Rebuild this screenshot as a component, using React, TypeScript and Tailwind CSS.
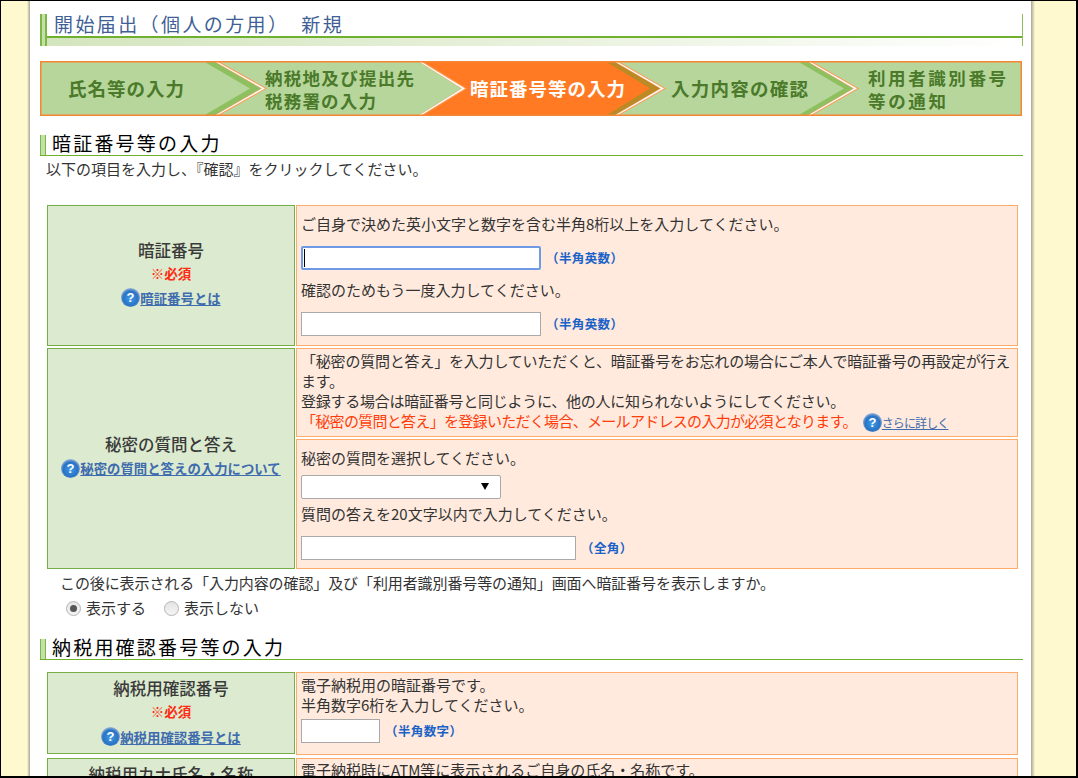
import type { ReactNode } from "react";

const STEP_BOUNDS = [
  { top: 175, tip: 224, bandTop: 163, bandTip: 210, band: "#8fc060", fill: "#b7d69b" },
  { top: 379, tip: 424, bandTop: 377, bandTip: 421, band: "#b7d69b", fill: "#b7d69b" },
  { top: 575, tip: 623, bandTop: 565, bandTip: 610, band: "#bc8a25", fill: "#ff7a22" },
  { top: 768, tip: 816, bandTop: 757, bandTip: 804, band: "#8fc060", fill: "#b7d69b" },
];

function chevron(top: number, tip: number) {
  return `0,0 ${top},0 ${tip},27.5 ${top},55 0,55`;
}

function StepBar() {
  const font = { fontFamily: '"Noto Sans CJK JP", sans-serif', fontWeight: 700 };
  return (
    <svg width="982" height="55" viewBox="0 0 982 55" className="mt-[15px] block">
      <rect width="982" height="55" fill="#b7d69b" />
      {[...STEP_BOUNDS].reverse().map((b) => (
        <g key={b.top}>
          <polygon points={chevron(b.top + 3, b.tip + 3)} fill="#ff9a55" />
          <polygon points={chevron(b.top + 1, b.tip + 1)} fill="#ffffff" />
          <polygon points={chevron(b.top - 1, b.tip - 2)} fill="#f5a56e" />
          <polygon points={chevron(b.top - 2, b.tip - 3)} fill={b.band} />
          <polygon points={chevron(b.bandTop, b.bandTip)} fill={b.fill} />
        </g>
      ))}
      <rect x="0.75" y="0.75" width="980.5" height="53.5" fill="none" stroke="#f58634" strokeWidth="1.5" />
      <g style={font} fill="#4a7a2a">
        <text x="28" y="35" fontSize="18.5" textLength="116">氏名等の入力</text>
        <text x="225" y="24" fontSize="17.5" textLength="149">納税地及び提出先</text>
        <text x="225" y="47" fontSize="17.5" textLength="111">税務署の入力</text>
        <text x="631" y="35" fontSize="18.5" textLength="137">入力内容の確認</text>
        <text x="828" y="24" fontSize="17.5" textLength="138">利用者識別番号</text>
        <text x="828" y="47" fontSize="17.5" textLength="78">等の通知</text>
      </g>
      <text x="430" y="35" fontSize="18.5" textLength="155" fill="#ffffff" style={font}>暗証番号等の入力</text>
    </svg>
  );
}

function TitleBar() {
  return (
    <div className="relative h-[32px] border-r border-[#8cbf5a]">
      <div className="flex h-[24px] items-end border-b-2 border-[#6fb02e] pb-[1px] pl-[14px] text-[19px] leading-[22px] tracking-[2.4px] text-[#3f5f96] whitespace-pre">
        開始届出（個人の方用）　新規
      </div>
      <div className="h-[8px] bg-gradient-to-r from-[#d3e5bd] via-[#e8f1dc] to-white" />
      <div className="absolute top-0 left-0 h-[32px] w-[7px] border-x-2 border-[#7db846] bg-[#c5dfa8]" />
    </div>
  );
}

function SectionHeading({ children, className }: { children: ReactNode; className: string }) {
  return (
    <div className={`flex h-[21px] items-end border-b border-[#6fb02e] ${className}`}>
      <div className="h-[20px] w-[6px] border-x border-[#7db846] bg-[#c5dfa8]" />
      <h2 className="mb-[1px] ml-[6px] text-[19px] leading-[22px] font-normal tracking-[2.2px] text-black">{children}</h2>
    </div>
  );
}

function HelpIcon() {
  return (
    <svg width="19" height="19" viewBox="0 0 19 19" className="shrink-0">
      <defs>
        <radialGradient id="help" cx="50%" cy="55%" r="55%">
          <stop offset="0%" stopColor="#3f9be8" />
          <stop offset="70%" stopColor="#2a72c4" />
          <stop offset="100%" stopColor="#9db8da" />
        </radialGradient>
      </defs>
      <circle cx="9.5" cy="9.5" r="9.5" fill="url(#help)" />
      <text x="9.5" y="14" textAnchor="middle" fontSize="13" fontWeight="700" fill="#fff" fontFamily='"Liberation Sans", sans-serif'>?</text>
    </svg>
  );
}

function HelpLink({ children }: { children: ReactNode }) {
  return (
    <span className="inline-flex items-center">
      <HelpIcon />
      <span className="text-[13.4px] leading-[18px] font-bold text-[#3f6cae] underline">{children}</span>
    </span>
  );
}

function Required() {
  return <div className="text-[13.5px] leading-[18px] font-bold text-[#ff2a12]">※必須</div>;
}

function HeadCell({ children, className }: { children: ReactNode; className: string }) {
  return (
    <div className={`flex flex-col items-center border border-[#74ae45] bg-[#dcebcf] text-[#3a3a3a] ${className}`}>
      {children}
    </div>
  );
}

function HeadTitle({ children }: { children: ReactNode }) {
  return <div className="text-[16.5px] leading-[20px] font-medium">{children}</div>;
}

function BodyCell({ children, className }: { children: ReactNode; className?: string }) {
  return <div className={`border border-[#ffab6b] bg-[#ffeadd] pl-[4px] ${className ?? ""}`}>{children}</div>;
}

function Hint({ children }: { children: ReactNode }) {
  return <span className="ml-[5px] text-[12.5px] font-bold tracking-[0.4px] text-[#1a62c8]">{children}</span>;
}

function TextBox({ className }: { className: string }) {
  return <input type="text" className={`block h-[24px] border border-[#a9a9a9] bg-white ${className}`} />;
}

function Radio({ checked }: { checked?: boolean }) {
  return (
    <span className="flex h-[15px] w-[15px] items-center justify-center rounded-full border border-[#b5b5b5] bg-gradient-to-b from-[#e4e4e4] to-[#f4f4f4]">
      {checked && <span className="h-[7px] w-[7px] rounded-full bg-[#555]" />}
    </span>
  );
}

export default function App() {
  return (
    <div
      className="flex h-[778px] w-[1078px] overflow-hidden border-t border-r-2 border-b-2 border-l border-black bg-[#fff9cf] text-[15px] leading-[20px] text-[#333]"
      style={{ fontFamily: '"Noto Sans CJK JP", sans-serif' }}
    >
      <div className="w-[26px] shrink-0" />
      <div className="w-[3px] shrink-0 bg-gradient-to-r from-[#fff9cf] to-[#a8a696]" />
      <main className="h-full w-[1001px] shrink-0 bg-white pt-[13px] pr-[8px] pl-[10px]">
        <TitleBar />
        <StepBar />

        <SectionHeading className="mt-[19px]">暗証番号等の入力</SectionHeading>
        <p className="mt-[3px] ml-[6px]">以下の項目を入力し、『確認』をクリックしてください。</p>

        <div className="mt-[26px] ml-[7px] grid w-[971px] grid-cols-[248px_722px] gap-x-[1px] gap-y-[2px]">
          <HeadCell className="h-[141px] pt-[34px]">
            <HeadTitle>暗証番号</HeadTitle>
            <div className="mt-[4px]"><Required /></div>
            <div className="mt-[6px]"><HelpLink>暗証番号とは</HelpLink></div>
          </HeadCell>
          <BodyCell className="h-[141px] pt-[8px]">
            <p>ご自身で決めた英小文字と数字を含む半角8桁以上を入力してください。</p>
            <div className="mt-[12px] flex items-center">
              <div className="flex h-[24px] w-[240px] items-center rounded-[2px] border-2 border-[#6f9be6] bg-white pl-[1px]">
                <div className="h-[18px] w-px bg-black" />
              </div>
              <Hint>（半角英数）</Hint>
            </div>
            <p className="mt-[10px]">確認のためもう一度入力してください。</p>
            <div className="mt-[12px] flex items-center">
              <TextBox className="w-[240px]" />
              <Hint>（半角英数）</Hint>
            </div>
          </BodyCell>

          <HeadCell className="h-[221px] justify-center pb-[2px]">
            <HeadTitle>秘密の質問と答え</HeadTitle>
            <div className="mt-[5px]"><HelpLink>秘密の質問と答えの入力について</HelpLink></div>
          </HeadCell>
          <div className="flex h-[221px] flex-col gap-y-[2px]">
            <BodyCell className="h-[89px] pt-[2px]">
              <p className="tracking-[-0.2px]">「秘密の質問と答え」を入力していただくと、暗証番号をお忘れの場合にご本人で暗証番号の再設定が行えます。</p>
              <p className="tracking-[-0.25px]">登録する場合は暗証番号と同じように、他の人に知られないようにしてください。</p>
              <div className="flex items-start text-[#ff3c0a]">
                <span className="tracking-[-0.7px]">「秘密の質問と答え」を登録いただく場合、メールアドレスの入力が必須となります。</span>
                <span className="mt-[2px] ml-[6px] inline-flex items-center">
                  <HelpIcon />
                  <span className="text-[12px] leading-[18px] tracking-[-0.9px] text-[#3f6cae] underline">さらに詳しく</span>
                </span>
              </div>
            </BodyCell>
            <BodyCell className="flex-1 pt-[8px]">
              <p>秘密の質問を選択してください。</p>
              <div className="relative mt-[7px] h-[24px] w-[200px]">
                <select className="block h-full w-full appearance-none rounded-[2px] border border-[#a9a9a9] bg-white" />
                <span className="absolute top-[8px] right-[12px] h-0 w-0 border-x-[4px] border-t-[7px] border-x-transparent border-t-black" />
              </div>
              <p className="mt-[5px]">質問の答えを20文字以内で入力してください。</p>
              <div className="mt-[12px] flex items-center">
                <TextBox className="w-[275px]" />
                <Hint>（全角）</Hint>
              </div>
            </BodyCell>
          </div>
        </div>

        <p className="mt-[4px] ml-[20px] tracking-[-0.1px]">この後に表示される「入力内容の確認」及び「利用者識別番号等の通知」画面へ暗証番号を表示しますか。</p>
        <div className="mt-[5px] ml-[26px] flex items-center">
          <Radio checked />
          <span className="ml-[5px]">表示する</span>
          <span className="ml-[18px]"><Radio /></span>
          <span className="ml-[5px]">表示しない</span>
        </div>

        <SectionHeading className="mt-[21px]">納税用確認番号等の入力</SectionHeading>

        <div className="mt-[12px] ml-[7px] grid w-[971px] grid-cols-[248px_722px] gap-x-[1px] gap-y-[3px]">
          <HeadCell className="h-[82px] pt-[5px]">
            <HeadTitle>納税用確認番号</HeadTitle>
            <div className="mt-[4px]"><Required /></div>
            <div className="mt-[7px]"><HelpLink>納税用確認番号とは</HelpLink></div>
          </HeadCell>
          <BodyCell className="h-[83px] pt-[2px]">
            <p>電子納税用の暗証番号です。</p>
            <p>半角数字6桁を入力してください。</p>
            <div className="mt-[4px] flex items-center">
              <TextBox className="w-[79px]" />
              <Hint>（半角数字）</Hint>
            </div>
          </BodyCell>
          <HeadCell className="h-[60px] pt-[5px]">
            <HeadTitle>納税用カナ氏名・名称</HeadTitle>
          </HeadCell>
          <BodyCell className="h-[60px] pt-[1px]">
            <p>電子納税時にATM等に表示されるご自身の氏名・名称です。</p>
          </BodyCell>
        </div>
      </main>
      <div className="w-[4px] shrink-0 bg-gradient-to-r from-[#a8a696] to-[#fff9cf]" />
    </div>
  );
}
